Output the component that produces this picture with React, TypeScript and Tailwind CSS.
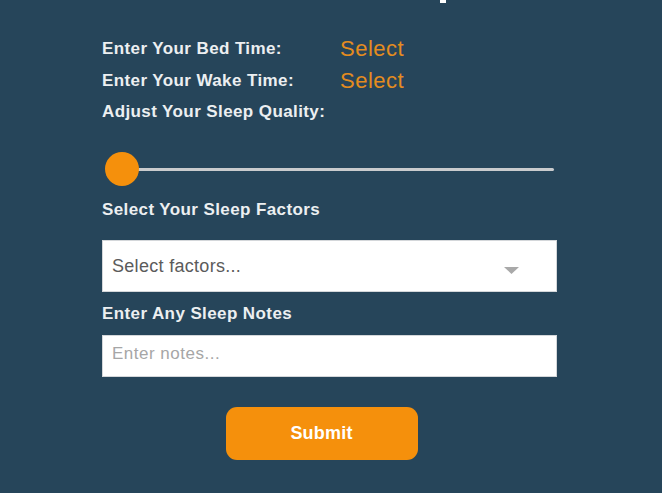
import { useState } from 'react';

const FONT = { fontFamily: '"Liberation Sans", Arial, sans-serif' };

const LABEL = 'text-[17px] leading-[20px] font-bold tracking-[0.4px] text-[#eceff1]';

function TimeRow({ label }: { label: string }) {
  return (
    <div className="flex items-center h-[32px]">
      <span className={`w-[238px] ${LABEL}`}>{label}</span>
      <span className="text-[22px] leading-[26px] tracking-[0.5px] text-[#e48c1f]">Select</span>
    </div>
  );
}

export default function App() {
  const [quality] = useState(0);

  return (
    <div className="relative w-[662px] h-[493px] bg-[#26455a] overflow-hidden" style={FONT}>
      <div className="absolute left-[440px] top-0 w-[6px] h-[3px] bg-white" />
      <div className="w-[455px] ml-[102px] pt-[33px] flex flex-col">
        <TimeRow label="Enter Your Bed Time:" />
        <TimeRow label="Enter Your Wake Time:" />
        <div className={`mt-[5px] ${LABEL}`}>Adjust Your Sleep Quality:</div>

        {/* slider */}
        <div className="relative h-[36px] mt-[29px] flex items-center">
          <div className="ml-[20px] mr-[3px] flex-1 h-[3px] rounded-full bg-[#c9cbcd]" />
          <div
            className="absolute top-[1px] w-[34px] h-[34px] rounded-full bg-[#f5900c]"
            style={{ left: 3 + quality * 4 }}
          />
        </div>

        <div className={`mt-[13px] ${LABEL}`}>Select Your Sleep Factors</div>

        <div className="mt-[20px] h-[52px] bg-white border border-[#d4d7da] flex items-center justify-between pl-[9px] pr-[37px]">
          <span className="text-[18px] leading-[22px] tracking-[0.3px] text-[#5b5b5b]">Select factors...</span>
          <svg width="15" height="8" viewBox="0 0 15 8" className="mt-[10px]">
            <path d="M0 0 L15 0 L7.5 7 Z" fill="#a9a9a9" />
          </svg>
        </div>

        <div className={`mt-[12px] ${LABEL}`}>Enter Any Sleep Notes</div>

        <div className="mt-[11px] h-[42px] bg-white border border-[#d4d7da] flex items-center pl-[9px]">
          <span className="text-[17px] leading-[20px] tracking-[0.5px] text-[#a6a6a6] -mt-[5px]">Enter notes...</span>
        </div>

        <div className="mt-[30px] flex justify-center pr-[16px]">
          <button className="w-[192px] h-[53px] rounded-[11px] bg-[#f5900c] text-white text-[18px] font-bold tracking-[0.2px]">
            Submit
          </button>
        </div>
      </div>
    </div>
  );
}
